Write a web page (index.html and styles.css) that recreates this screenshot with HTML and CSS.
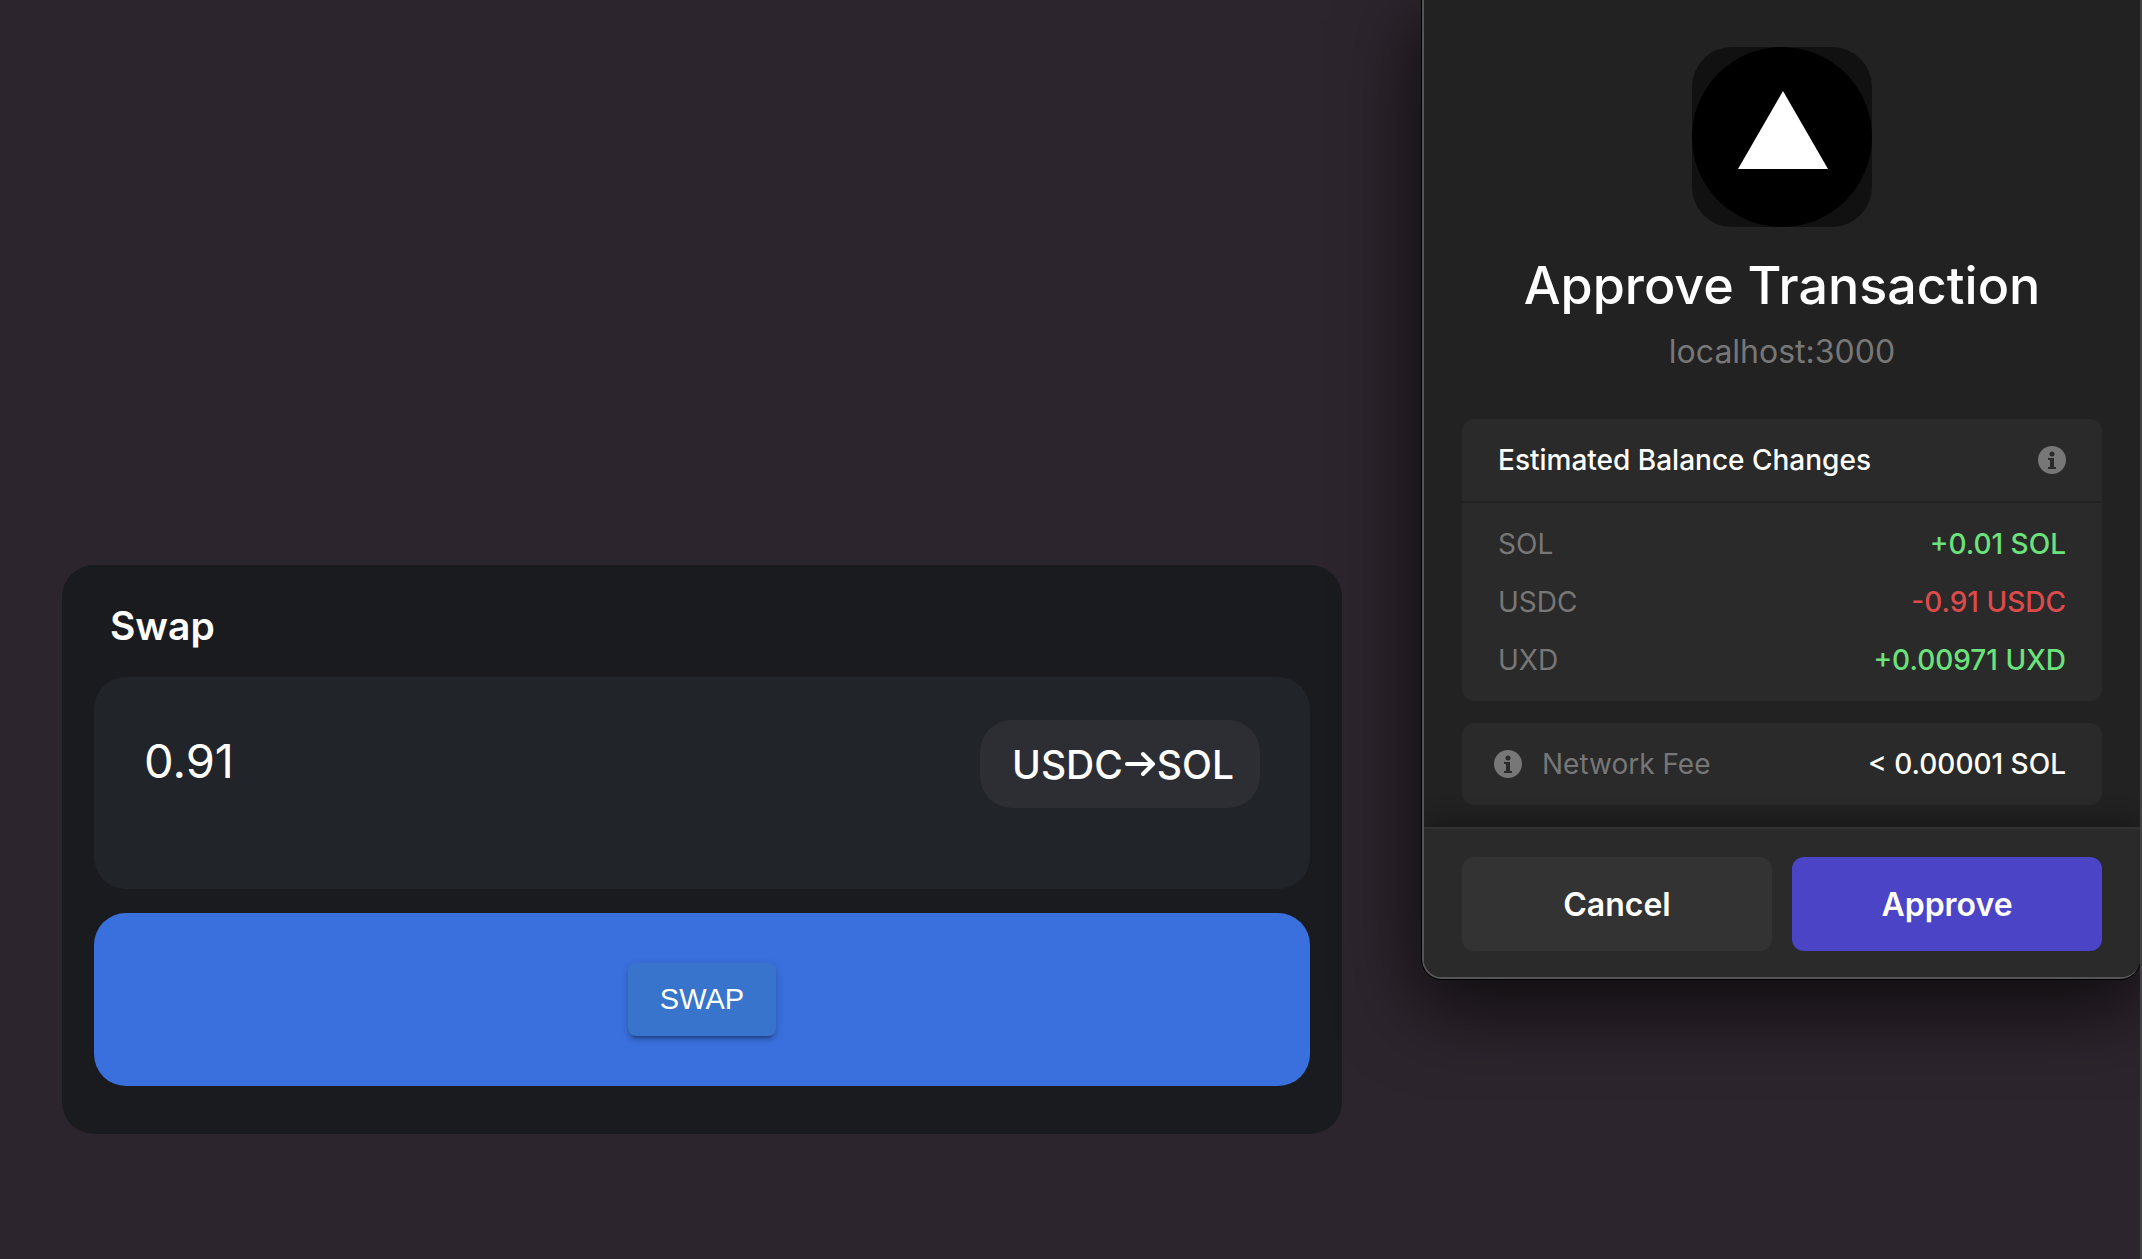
FILE: index.html
```html
<!DOCTYPE html>
<html lang="en">
<head>
<meta charset="utf-8">
<title>Swap</title>
<link rel="stylesheet" href="styles.css">
</head>
<body>
<main class="page">
  <section class="swap-card">
    <h1 class="swap-title"><label for="amount">Swap</label></h1>
    <div class="amount-panel">
      <input class="amount-input" id="amount" type="text" inputmode="decimal" value="0.91">
      <button class="pair" type="button">
        <span>USDC</span>
        <svg class="pair-arrow" viewBox="0 0 32 26" aria-hidden="true"><path d="M3 13H29M19 3L29 13L19 23"/></svg>
        <span>SOL</span>
      </button>
    </div>
    <div class="swap-action">
      <button class="swap-button" type="button">SWAP</button>
    </div>
  </section>
</main>
<aside class="wallet" role="dialog" aria-labelledby="wallet-title">
  <div class="wallet-body">
    <svg class="app-logo" viewBox="0 0 180 180" aria-hidden="true">
      <rect width="180" height="180" rx="40" fill="#111"/>
      <circle cx="90" cy="90" r="90" fill="#000"/>
      <path d="M91 44L136 122H46Z" fill="#fff"/>
    </svg>
    <h2 class="wallet-title" id="wallet-title">Approve Transaction</h2>
    <p class="origin">localhost:3000</p>
    <section class="changes">
      <header class="changes-header">
        <h3 class="changes-title">Estimated Balance Changes</h3>
        <svg class="info" viewBox="0 0 28 28" aria-hidden="true"><circle class="info-disc" cx="14" cy="14" r="14"/><path class="info-mark" d="M10 12H16V21H18V23H10V21H12V14H10Z"/><circle class="info-mark" cx="14" cy="8" r="2.5"/></svg>
      </header>
      <table class="rows">
        <tr><th scope="row">SOL</th><td class="gain">+0.01 SOL</td></tr>
        <tr><th scope="row">USDC</th><td class="loss">-0.91 USDC</td></tr>
        <tr><th scope="row">UXD</th><td class="gain">+0.00971 UXD</td></tr>
      </table>
    </section>
    <section class="fee">
      <svg class="info" viewBox="0 0 28 28" aria-hidden="true"><circle class="info-disc" cx="14" cy="14" r="14"/><path class="info-mark" d="M10 12H16V21H18V23H10V21H12V14H10Z"/><circle class="info-mark" cx="14" cy="8" r="2.5"/></svg>
      <span class="fee-label">Network Fee</span>
      <span class="fee-value">&lt; 0.00001 SOL</span>
    </section>
  </div>
  <footer class="wallet-footer">
    <button class="choice" type="button">Cancel</button>
    <button class="choice choice-primary" type="button">Approve</button>
  </footer>
</aside>
</body>
</html>
```
FILE: styles.css
```css
* { box-sizing: border-box; }

body {
  margin: 0;
  min-height: 100vh;
  display: flex;
  align-items: flex-start;
  justify-content: space-between;
  background: #2d252d;
  border-right: 2px solid #454246;
  color: #fff;
  font-family: Inter, "Liberation Sans", sans-serif;
}

h1, h2, h3, p { margin: 0; }

button {
  border: 0;
  color: inherit;
  font-family: inherit;
}

/* Swap form */
.page {
  flex: 1;
  padding: 565px 80px 0 62px;
}

.swap-card {
  padding: 32px 32px 48px;
  border-radius: 32px;
  background: #1a1b1f;
}

.swap-title {
  padding: 5px 16px 27px;
  font-size: 39px;
  line-height: 48px;
  font-weight: 600;
}

.amount-panel {
  display: flex;
  align-items: flex-start;
  justify-content: space-between;
  min-height: 212px;
  padding: 43px 50px;
  border-radius: 32px;
  background: #212429;
}

.amount-input {
  flex: 1;
  min-width: 0;
  height: 80px;
  padding: 0;
  border: 0;
  outline: 0;
  background: transparent;
  color: #fff;
  font-family: inherit;
  font-size: 47px;
}

.pair {
  display: flex;
  align-items: center;
  gap: 1px;
  height: 88px;
  padding: 0 26px 0 32px;
  border-radius: 32px;
  background: #2d2e33;
  font-size: 39px;
  font-weight: 500;
}

.pair-arrow {
  width: 32px;
  height: 26px;
  fill: none;
  stroke: #fff;
  stroke-width: 4;
  stroke-linecap: round;
  stroke-linejoin: round;
}

.swap-action {
  display: flex;
  justify-content: center;
  margin-top: 24px;
  padding: 50px;
  border-radius: 32px;
  background: #3a70dd;
}

.swap-button {
  height: 73px;
  padding: 0 32px;
  border-radius: 8px;
  background: #3874cb;
  font-family: "Liberation Sans", Arial, sans-serif;
  font-size: 29px;
  box-shadow: 0 6px 2px -4px rgba(0, 0, 0, 0.2), 0 4px 4px rgba(0, 0, 0, 0.14), 0 2px 10px rgba(0, 0, 0, 0.12);
}

/* Wallet approval popup */
.wallet {
  flex: 0 0 718px;
  border: 2px solid #555;
  border-top: 0;
  border-right-width: 0;
  border-radius: 0 0 20px 20px;
  background: #222;
  box-shadow: 0 0 0 1px #000, 0 24px 80px 4px rgba(0, 0, 0, 0.72);
  overflow: hidden;
}

.wallet-body {
  padding: 47px 38px 22px;
}

.app-logo {
  display: block;
  width: 180px;
  height: 180px;
  margin: 0 auto;
}

.wallet-title {
  margin-top: 27px;
  font-size: 52px;
  line-height: 64px;
  font-weight: 500;
  text-align: center;
}

.origin {
  margin-top: 14px;
  color: #777;
  font-size: 32px;
  line-height: 40px;
  text-align: center;
}

.changes, .fee {
  border-radius: 12px;
  background: #2a2a2a;
  font-size: 28px;
}

.changes { margin-top: 47px; }

.changes-header {
  display: flex;
  align-items: center;
  justify-content: space-between;
  height: 84px;
  padding: 0 36px;
  border-bottom: 2px solid #222;
}

.changes-title {
  font-size: 28px;
  font-weight: 500;
}

.info {
  width: 28px;
  height: 28px;
}

.info-disc { fill: #777; }
.info-mark { fill: #2a2a2a; }

.rows {
  width: 100%;
  padding: 12px 36px;
  border-spacing: 0;
}

.rows th, .rows td {
  height: 58px;
  padding: 0;
}

.rows th {
  color: #777;
  font-weight: 400;
  text-align: left;
}

.rows td {
  font-weight: 500;
  text-align: right;
}

.gain { color: #6be27b; }
.loss { color: #dc4b4b; }

.fee {
  display: flex;
  align-items: center;
  height: 82px;
  margin-top: 22px;
  padding: 0 36px 0 32px;
}

.fee-label {
  margin-left: 20px;
  color: #777;
}

.fee-value {
  margin-left: auto;
  font-weight: 500;
}

.wallet-footer {
  position: relative;
  display: grid;
  grid-template-columns: 1fr 1fr;
  gap: 20px;
  padding: 28px 38px 26px;
  border-top: 2px solid #323232;
  background: #2a2a2a;
  box-shadow: 0 -6px 24px rgba(0, 0, 0, 0.3);
}

.choice {
  height: 94px;
  border-radius: 12px;
  background: #333;
  font-size: 32px;
  font-weight: 600;
}

.choice-primary { background: #4b44c6; }
```
